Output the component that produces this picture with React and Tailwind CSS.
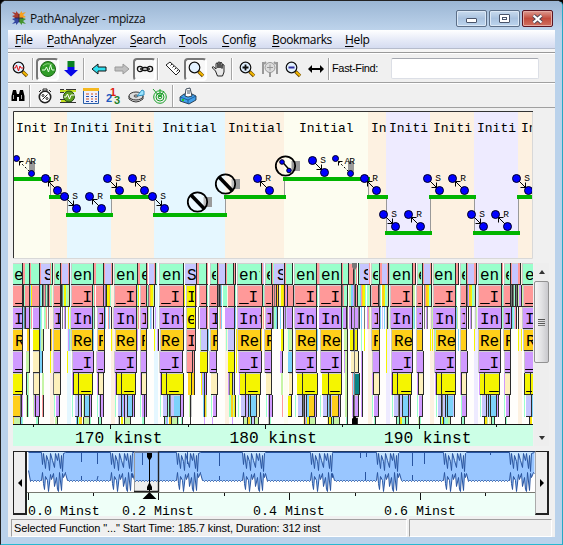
import React from "react";

const MONO = "'Liberation Mono', monospace";

const COLORS = {
  g: "#99ffcc", p: "#ff9999", l: "#c6c6ff", v: "#d09aff", o: "#ffcf1a", y: "#f5f500",
  c: "#fdf0bc", b: "#7cd2fa", k: "#2c2c2c", L: "#c6f4a6", h: "#c8c8c8", m: "#777777", t: "#0a8484",
  w: "#ffffff", r: "#f06a70",
};

const BANDS = [
  [13, 37, "#fdfdf0"], [50, 17, "#fdf1e1"], [67, 44, "#e5f7ff"], [111, 43, "#fdf1e1"],
  [154, 71, "#e5f7ff"], [225, 59, "#fdf1e1"], [284, 84, "#fdfdf0"], [368, 18, "#fdf1e1"],
  [386, 44, "#eeebff"], [430, 44, "#fdf1e1"], [474, 44, "#eeebff"], [518, 15, "#fdf1e1"],
];
const STATES = [
  [16, "Init"], [53, "In"], [70, "Initi"], [114, "Initi"], [162, "Initial"], [228, "Initial"],
  [299, "Initial"], [371, "In"], [389, "Initi"], [433, "Initi"], [477, "Initi"], [521, "In"],
];
const LEVELS = [
  [13, 51, 177], [49, 69, 195], [66, 113, 213], [110, 156, 195], [153, 227, 213], [224, 286, 195],
  [283, 370, 177], [367, 388, 195], [385, 432, 231], [429, 476, 195], [473, 520, 231], [517, 533, 195],
];
const MOVES = [
  ["R", 45.5, 178.5], ["S", 64.5, 196.5], ["R", 89.5, 196.5], ["S", 107.5, 178.5], ["R", 132.5, 178.5],
  ["S", 152.5, 196.5], ["R", 257.5, 178.5], ["S", 312.5, 160.5], ["R", 364.5, 178.5], ["S", 383.5, 214.5],
  ["R", 408.5, 214.5], ["S", 427.5, 178.5], ["R", 452.5, 178.5], ["S", 471.5, 214.5], ["R", 495.5, 214.5],
  ["S", 516.5, 178.5],
];

function Ball({ x, y, r = 4 }) {
  return <circle cx={x} cy={y} r={r} fill="#0000ff" stroke="#000022" strokeWidth="1" />;
}

function Move({ kind, x, y }) {
  const tip = kind === "S" ? [x + 9, y + 9, -1] : [x + 3, y + 3, 1];
  return (
    <g>
      <path d={`M${x} ${y}l12 12`} stroke="#000" />
      <path d={`M${tip[0] + tip[2] * 5} ${tip[1]}H${tip[0]}V${tip[1] + tip[2] * 5}`} fill="none" stroke="#000" />
      <Ball x={x} y={y} />
      <Ball x={x + 12} y={y + 12} />
      <text x={x + 7.8} y={y + 2.7} fontSize="9.500" fontFamily={MONO}>{kind}</text>
    </g>
  );
}

function Retry({ x }) {
  return (
    <g>
      <path d={`M${x + 12.5} 161.500h6v10h-6z`} fill="#9a9a9a" />
      <path d={`M${x} 158.500l15 15`} stroke="#000" strokeDasharray="2 2" />
      <path d={`M${x + 3} 165.500v-4h4`} stroke="#000" fill="none" />
      <Ball x={x} y={158.5} r={3} />
      <Ball x={x + 15} y={173.5} r={3} />
      <text x={x + 9} y="163.800" fontSize="9.500" fontFamily={MONO} letterSpacing="-1">AR</text>
    </g>
  );
}

function Blocked({ x, y, link }) {
  return (
    <g>
      <path d={`M${x + 6} ${y - 5}h8.500v10h-8.500z`} fill="#9a9a9a" />
      <circle cx={x} cy={y} r="9.700" fill={link ? "none" : "#fff"} fillOpacity="0.35" stroke="#000" strokeWidth="1.800" />
      {link ? (
        <g>
          <path d={`M${x - 3} ${y - 4}l7 8`} stroke="#000" strokeWidth="1.500" />
          <Ball x={x - 3.5} y={y - 4} r={2.3} />
          <Ball x={x + 3.5} y={y + 4.5} r={2.3} />
        </g>
      ) : (
        <path d={`M${x - 6.5} ${y - 7}l13.500 14`} stroke="#000" strokeWidth="3.600" />
      )}
    </g>
  );
}

function StateChart() {
  return (
    <svg width="520" height="148" viewBox="13 111 520 148" className="block shrink-0">
      {BANDS.map(([x, w, c]) => <rect key={x} x={x} y="111" width={w} height="148" fill={c} />)}
      {BANDS.map(([x, w], i) => (
        <svg key={x} x={x} y="111" width={w} height="40" viewBox={`${x} 111 ${w} 40`}>
          <text x={STATES[i][0]} y="132" fontSize="13" fontFamily={MONO}>{STATES[i][1]}</text>
        </svg>
      ))}
      {LEVELS.slice(1).map(([x, , y], i) => {
        const prev = LEVELS[i][2];
        return <rect key={x} x={x + 1} y={Math.min(y, prev)} width="1" height={Math.abs(y - prev)} fill="#999" />;
      })}
      {LEVELS.map(([a, b, y]) => <rect key={a} x={a} y={y} width={b - a} height="4" fill="#00b400" />)}
      <Retry x={16.5} />
      <Retry x={335.5} />
      {MOVES.map(([k, x, y]) => <Move key={x} kind={k} x={x} y={y} />)}
      <Blocked x={197.5} y={202} />
      <Blocked x={225.5} y={184} />
      <Blocked x={285.5} y={166} link />
      <path d="M13.500 259V111.500H533" fill="none" stroke="#333" />
      <path d="M13 258.500H532.500V112" fill="none" stroke="#d8d8d8" />
    </svg>
  );
}

// Run-length call stacks: "@x" moves the pen, "<colour><width>" paints, "_n" skips.
const ROWS = [
  "@13 g9 k1 p2 @25 g4 k1 p1 g1 @32 g7 k1 p1 @41 l9 p1 g1 k1 @54 h1 g5 k1 p1 l6 p1 k1 @71 h1 g21 k1 p2 @96 g7 k1 p1 @105 l6 p1 k1 @114 h1 g22 k1 p2 @140 g6 k1 p1 @149 l5 p1 k1 g1 @159 h1 g23 k1 @185 l11 k1 p2 @199 g7 k1 p1 @210 h1 g6 k1 p1 @219 l6 k1 p1 @227 g6 k1 p1 k1 @237 h1 g23 k1 p1 l1 @265 h1 g5 k1 p1 g1 @274 l10 k1 p1 @286 g6 k1 @294 h1 g21 k1 p2 @319 h1 g21 k1 p1 @343 g5 k1 p4 k1 p1 g1 p1 @358 k1 g1 @360 l9 p1 @371 h1 g7 k1 p2 @382 l5 p1 k1 @389 h1 g22 k1 p2 k1 @417 h1 g4 k1 p1 @424 l6 p1 k1 @433 h1 g21 k1 p2 k1 @460 h1 g5 k1 p1 @468 l6 p2 k1 @478 h1 g22 k1 p1 @504 h1 g5 k1 p1 @512 l6 p2 k1 @522 h1 g10",
  "@13 p9 k2 g1 p4 k1 b1 y1 @32 p7 k1 b1 g1 k1 m1 p1 m1 g1 @47 m1 k1 p1 g1 L1 @53 h1 p6 k2 m1 g1 y2 g1 L2 k1 @71 h1 p20 k1 g1 p1 @96 p7 k1 v1 m1 k1 y2 o1 g1 @114 h1 p21 k1 g1 y1 @140 h1 p5 k1 g1 m1 p1 o1 y2 L1 k1 @159 h1 p23 k1 y1 @186 h1 y8 k1 p1 @199 h1 p6 k1 g1 @209 h1 p7 k1 m1 k1 m1 b1 @223 g4 @228 p6 k1 g1 @237 h1 p24 k1 g1 @264 h1 p7 k1 p1 m1 p1 k1 @277 o1 k1 c2 y2 o1 k1 p1 @286 v1 k1 p5 k1 @294 h1 p21 k1 g1 @319 h1 p21 k1 m1 p1 g3 k1 @349 L2 b2 v1 y1 k1 @356 p1 k1 g2 b1 p1 o1 y2 g1 @367 g2 L1 k1 @371 h1 p6 k1 m1 g1 @382 o2 y1 g2 L1 k1 @390 h1 p21 k1 L2 @416 h1 p5 k1 @424 m1 p1 o2 y1 g2 k1 @433 h1 p21 k1 g1 @460 h1 p5 k1 m1 v1 @469 o2 y1 g2 L1 k1 @478 h1 p22 k1 g1 @503 h1 p6 k1 m1 k1 m1 g1 k1 m1 k1 @518 L1 v2 k1 L1 @523 h1 p10",
  "@13 v9 k1 b1 m1 k1 @26 v3 k1 g1 p1 @33 v6 k1 b1 g1 @43 _1 g1 L1 p1 _1 m1 _2 @53 h1 v6 k1 _1 m1 _1 v1 m1 _2 @68 y1 _1 L1 @71 v21 k1 g1 m1 @97 h1 v6 k1 b1 @108 p1 b1 _1 k1 @113 h1 v22 k1 L1 p1 @140 h1 v6 k1 L1 _1 b1 l1 @153 k1 _1 v1 _1 @159 h1 v23 k1 @186 h1 y8 k1 _2 m1 @200 v6 k1 p1 @209 h1 v7 k1 _1 L1 p1 b1 @225 v9 k1 b1 @237 h1 v23 k1 c1 p1 @265 h1 v6 k1 m1 g2 b1 k1 _2 b1 @283 k1 v1 m1 l1 @287 v5 k1 @294 h1 v21 k1 @319 v22 k1 g1 v3 k1 m1 @349 v2 k1 v6 m1 k1 _1 b1 _1 @364 m1 _2 v1 p1 L1 @371 h1 v7 k1 b1 _1 l1 _1 b1 @386 h1 k1 L1 @390 h1 v21 k1 g1 b1 @416 h1 v5 k1 _1 m1 _1 v1 m1 _2 @431 h1 L1 @433 v22 k1 b1 L1 @460 h1 v5 k1 _1 k1 _1 v1 m1 _2 @475 h1 L1 @478 v23 k1 g1 @503 h1 v7 k1 b1 g1 @514 l1 p1 k1 _1 k1 @522 h1 v10",
  "@13 o9 k1 @27 o2 k1 @33 y6 k1 b1 L2 k1 @50 k1 o1 _1 h1 o6 k1 @68 v1 b1 L1 h1 o20 k1 b1 @97 h1 o6 k1 @111 y1 c1 @115 h1 o20 k1 v1 @140 h1 o5 k1 @154 y1 _2 v1 k1 _1 h1 o22 k1 @186 h1 p8 k1 @200 L1 l6 k1 b1 @210 h1 o6 k1 @226 g1 _1 l6 k1 _1 y1 h1 o22 k1 o1 @264 h1 o6 k1 @281 y2 k1 @288 g1 L3 k1 @295 h1 o20 k1 b1 @320 h1 o20 k1 @344 L3 k1 _2 y3 k1 y3 k1 @361 g1 _2 y1 @371 h1 o7 k1 @386 y1 @391 h1 o20 k1 @416 h1 o5 k1 @430 y1 _1 y1 @434 h1 g1 o19 k1 _2 b1 @460 h1 o5 k1 @474 y1 @478 h1 o21 k1 _2 h1 o6 k1 @518 y1 _2 y1 _1 h1 o10",
  "@13 v9 k1 @26 L3 k1 @33 c6 k1 b2 k1 @50 y1 _2 h1 v6 k1 @67 y1 _4 h1 v20 k1 @96 h1 v7 k1 @114 h1 v21 k1 @140 h1 v5 k1 @159 h1 v22 k1 @186 h1 p5 k1 p1 k1 @200 y7 k1 _1 h1 v6 k1 @228 y6 k1 _1 y1 @238 h1 v22 k1 @264 h1 v6 k1 @280 v2 k1 @288 b4 k1 @295 h1 v20 k1 @320 h1 v20 k1 @344 v1 L2 k1 _3 c3 k1 c3 k1 @361 v1 k1 @372 h1 v6 k1 @386 y1 @391 h1 v20 k1 @416 h1 v6 k1 @434 h1 v20 k1 @460 h1 v6 k1 @478 h1 v21 k1 @504 h1 v5 k1 @524 h1 v10",
  "@13 y9 k1 @26 k1 g1 L1 @33 m1 c5 k1 @42 L2 @53 m1 c6 k1 @72 v1 k1 y4 k1 y13 k1 @97 v1 k1 c4 k1 @115 v1 k1 y4 k1 y13 k1 @140 v1 k1 c4 k1 @160 v1 k1 y4 k1 y16 k1 @188 o2 y1 k1 o2 k1 @201 y1 v1 b1 k1 v1 k1 @211 c6 k1 @228 v1 m1 y2 k1 l1 k1 @239 v1 y5 k1 y14 k1 @266 c5 k1 @281 L2 @289 c3 k1 @297 y5 k1 y14 k1 @322 y6 k1 y12 k1 @345 L2 k1 @352 p1 b2 t4 k1 @361 v1 k1 @372 v1 k1 c5 k1 @391 v1 k1 y4 k1 y13 k1 @417 v1 k1 c4 k1 @435 v1 k1 y4 k1 y13 k1 @460 v1 k1 c4 k1 @479 v1 y4 k1 y14 k1 @504 v1 c5 k1 @524 k1 y5 k1 y4",
  "@13 o7 m1 k1 v1 @26 L1 k1 g1 @33 L1 v1 k1 v3 k1 @42 p1 k1 @54 g1 _1 v3 k1 @72 g1 _2 l3 k1 l1 v1 k1 _1 L1 k1 b4 k1 v1 k1 @97 g1 _1 l1 k1 v2 k1 @115 g1 _2 l3 k1 b1 v1 k1 l2 k1 b4 k1 v1 k1 @140 g1 _1 v2 k1 v1 k1 @160 g1 _2 l4 k1 g1 k1 m1 l3 b6 k1 v2 k1 @189 L1 k1 h1 @203 b1 k1 o1 L1 @211 g1 _1 v3 k1 @229 g2 o2 L1 y1 k1 @238 g1 _2 l4 k1 v1 l1 k1 b1 k1 b5 k1 c2 k1 @266 g1 _1 v1 k1 v2 k1 @282 p1 @288 y3 k1 @295 g1 _2 l4 k1 m1 k1 l1 k1 b2 o5 k1 v1 k1 @320 g1 _2 l4 k1 b1 m1 k1 l1 o6 k1 v1 k1 @345 L2 k1 @352 v1 k2 v3 k1 @361 v1 k1 @372 g1 _1 v4 k1 @392 g1 _1 l4 m1 k1 l2 k1 b5 k1 v1 k1 @417 g1 _1 v3 k1 @436 g1 _1 l3 k1 m1 l2 k1 b1 k1 b5 l1 k1 @461 g1 v4 k1 @480 g1 _1 l4 k1 l1 k1 b1 k1 b5 k1 v1 k1 @504 g1 _1 v3 k1 @524 g1 _1 l5 k1 b2",
  "@13 o1 L6 k1 b1 g1 @36 g2 k1 @55 L2 k1 @76 b1 k1 g1 y1 o2 _1 k1 L5 k1 g1 @98 k1 g2 k1 @118 h1 k1 _1 y2 _1 k1 L5 k1 @142 g2 k1 @164 k1 g1 v1 b1 _1 o2 k1 L5 k1 g1 @181 g1 k1 @190 k1 @204 v1 @212 v1 @232 v1 @243 k1 L3 k1 o2 g1 k1 l2 k1 L3 k1 @268 h1 k1 g1 @303 c1 k1 p1 b1 y2 k1 L5 k1 @327 c1 k1 y2 k1 g1 k1 L5 k1 @346 g1 k1 @354 k4 @374 g1 k1 @396 k1 g2 k1 o1 y1 g3 k1 g2 k1 @418 L1 k1 g1 @440 k1 g1 y1 k1 b1 g3 L2 k1 @461 k1 g2 k1 @484 k1 y1 o1 L1 _1 c2 k1 g2 k1 @505 k1 g1 @529 k1 o1 y1",
];

const LABELS = [
  [[14, 8, "e"], [44, 6, "S"], [55, 4, "e"], [73, 19, "en"], [116, 20, "en"], [141, 5, "e"], [162, 21, "en"], [187, 9, "S"], [211, 5, "e"], [239, 21, "ent"], [266, 4, "e"], [277, 6, "S"], [296, 20, "en"], [321, 20, "en"], [363, 5, "S"], [372, 6, "e"], [392, 20, "en"], [418, 3, "e"], [434, 20, "en"], [461, 4, "e"], [480, 20, "en"], [505, 4, "e"], [525, 8, "e"]],
  [[15, 7, "_"], [54, 6, "_"], [73, 19, "_I"], [116, 20, "_I"], [141, 4, "_"], [161, 21, "_I"], [187, 7, "I"], [201, 5, "_"], [211, 5, "_"], [239, 22, "_I"], [266, 5, "_"], [296, 20, "_I"], [321, 20, "_I"], [373, 5, "_"], [392, 20, "_I"], [418, 3, "_"], [435, 20, "_I"], [461, 4, "_"], [480, 20, "_I"], [505, 5, "_"], [525, 8, "_"]],
  [[14, 8, "I"], [54, 6, "I"], [73, 19, "In"], [98, 5, "I"], [116, 20, "In"], [141, 5, "I"], [161, 22, "Int"], [187, 7, "e"], [211, 6, "I"], [239, 22, "Int"], [266, 5, "I"], [296, 20, "In"], [321, 20, "In"], [373, 5, "I"], [392, 20, "In"], [418, 3, "I"], [435, 20, "In"], [461, 4, "I"], [480, 20, "In"], [504, 6, "I"], [525, 8, "I"]],
  [[15, 7, "R"], [73, 19, "Re"], [98, 5, "R"], [116, 20, "Re"], [141, 4, "R"], [161, 21, "Re"], [187, 7, "I"], [212, 5, "R"], [240, 20, "Re"], [266, 5, "R"], [297, 19, "Re"], [322, 19, "Re"], [373, 5, "R"], [394, 18, "Re"], [437, 18, "Re"], [480, 20, "Re"], [505, 5, "R"], [526, 7, "R"]],
  [[15, 7, "_"], [73, 19, "_I"], [98, 5, "_"], [116, 20, "_I"], [161, 21, "_I"], [211, 6, "_"], [240, 20, "_I"], [265, 5, "_"], [296, 20, "_I"], [321, 20, "_I"], [393, 19, "_I"], [436, 19, "_I"], [480, 20, "_I"], [505, 5, "_"], [525, 8, "_"]],
  [[15, 7, "_"], [81, 11, "_"], [124, 10, "_"], [169, 13, "_:"], [248, 12, "_:"], [305, 10, "_"], [330, 11, "_"], [401, 10, "_"], [445, 10, "_"], [489, 10, "_"], [526, 6, "_"]],
];

function decode(row) {
  let x = 13;
  const out = [];
  for (const token of row.split(" ")) {
    const n = Number(token.slice(1));
    if (token[0] === "@") { x = n; continue; }
    if (token[0] !== "_") out.push([x, n, COLORS[token[0]]]);
    x += n;
  }
  return out;
}

function CallStack() {
  return (
    <svg width="520" height="183" viewBox="13 263 520 183" className="block shrink-0">
      <rect x="13" y="263" width="520" height="161" fill="#fffefc" />
      {BANDS.slice(1).map(([x, , c]) => <rect key={x} x={x} y="263" width="4" height="161" fill={c} />)}
      {ROWS.map((row, i) => {
        const top = 263 + i * 22;
        const height = i === 7 ? 7 : 22;
        return (
          <g key={i} shapeRendering="crispEdges">
            {decode(row).map(([x, w, c], j) => (
              <g key={j}>
                <rect x={x} y={top} width={w} height={height} fill={c} />
                {w > 2 && <rect x={x} y={top} width={w} height="1" fill="#d0d0d0" />}
                {(w > 2 || i < 2) && i < 7 && <rect x={x} y={top + 21} width={w} height="1" fill="#2c2c2c" />}
              </g>
            ))}
          </g>
        );
      })}
      {LABELS.map((row, i) => row.map(([x, w, s]) => (
        <svg key={`${i}-${x}`} x={x} y={263 + i * 22} width={w} height="22" viewBox={`${x} 0 ${w} 22`}>
          <text x={x} y="17" fontSize="16" fontFamily={MONO}>{s}</text>
        </svg>
      )))}
      <path d="M352 263h5v4l-2 3h-1l-2-3z" fill="#777" />
      <rect x="354" y="268" width="1" height="150" fill="#777" />
      <path d="M352 424v-5l2-3h1l2 3v5z" fill="#000" />
      <rect x="13" y="424" width="520" height="22" fill="#ccffe6" />
      <path d="M13 424.500H533M110.500 424v5M265.500 424v5M419.500 424v5M33.500 424v3M188.500 424v3M342.500 424v3M496.500 424v3" stroke="#111" />
      {[[75, "170 kinst"], [229.5, "180 kinst"], [384, "190 kinst"]].map(([x, s]) => (
        <text key={x} x={x} y="443" fontSize="16.200" fontFamily={MONO}>{s}</text>
      ))}
    </svg>
  );
}

// Offsets from a burst's left edge for the lower and upper envelopes.
const BURSTS = [[41, 65], [110, 132], [176, 200], [242, 265], [310, 332], [376, 399], [443, 466], [509, 534]];
const LOW = [[0, 480], [1, 472], [2, 483], [3, 489], [4, 476], [6, 480], [7, 491], [9, 474], [10, 479], [12, 473], [13, 486], [15, 477], [16, 489], [17, 491], [18, 472], [20, 490], [21, 473], [22, 477], [24, 472]];
const HIGH = [[0, 452], [1, 464], [2, 453], [4, 468], [5, 455], [7, 461], [8, 470], [9, 453], [11, 460], [13, 467], [14, 453], [16, 460], [17, 453], [19, 468], [20, 455], [21, 471], [22, 453]];

function tracePoints() {
  const low = [[28, 470], [30, 481]];
  const high = [[28, 452]];
  let x = 31;
  for (const [a, b] of BURSTS) {
    for (; x < a; x++) low.push([x, 480 + (x % 3 === 0 ? 1 : 0)]);
    LOW.filter(([dx]) => a + dx <= b).forEach(([dx, y]) => low.push([a + dx, y]));
    HIGH.filter(([dx]) => a + dx <= b).forEach(([dx, y]) => high.push([a + dx, y]));
    low.push([b, 473]);
    high.push([b, 452]);
    x = b + 2;
  }
  return { low, high };
}

const TRACE = tracePoints();
const join = (pts) => pts.map(([x, y]) => `${x + 0.5},${y + 0.5}`).join(" ");

function Overview() {
  const area = `${join(TRACE.high)} ${join([...TRACE.low].reverse())}`;
  return (
    <svg width="508" height="65" viewBox="27 451 508 65" className="block shrink-0">
      <rect x="27" y="451" width="508" height="42" fill="#fff" />
      <rect x="27" y="492" width="508" height="24" fill="#effff8" />
      <rect x="134" y="453" width="24" height="39" fill="#eeeeee" />
      {BURSTS.map(([a, b]) => <rect key={a} x={a} y="452" width={b - a} height="18" fill="#c5e4ff" />)}
      <polygon points={area} fill="#99c6ff" />
      <polyline points={join(TRACE.low)} fill="none" stroke="#2854a0" strokeWidth="1" />
      <polyline points={join(TRACE.high)} fill="none" stroke="#2854a0" strokeWidth="1" />
      <path d="M81.500 452v10M97.500 452v12M142.500 452v13M187.500 452v12M219.500 452v14M360.500 452v6M366.500 452v5M412.500 452v14M424.500 452v12M490.500 452v3M81.500 480v-4M97 480l1-4M219.500 480v-4M365.500 480v-8M412.500 480v-5" stroke="#2854a0" fill="none" />
      <path d="M27 451.500H535" stroke="#203860" />
      <path d="M27 492.500H535" stroke="#777870" />
      <path d="M28.500 493v7M158.500 493v7M289.500 493v7M420.500 493v7M93.500 493v3M224.500 493v3M355.500 493v3M485.500 493v3" stroke="#111" />
      <path d="M134.500 491V452H158" stroke="#999" fill="none" />
      <path d="M134 491.500H158.500V452" stroke="#222" fill="none" strokeWidth="1.400" />
      <path d="M149.500 453V491" stroke="#000" />
      <path d="M147 453h5v4l-2 3h-1l-2-3zM147 490v-3l2-4h1l2 4v3zM149.500 492l7 7h-14z" fill="#000" />
      {[[28, "0.0 Minst"], [122, "0.2 Minst"], [253, "0.4 Minst"], [384, "0.6 Minst"]].map(([x, s]) => (
        <text key={x} x={x} y="515" fontSize="13.300" fontFamily={MONO}>{s}</text>
      ))}
    </svg>
  );
}

function Lens({ mark, gray }) {
  return (
    <g fill="none">
      <path d="M10.500 10.500l4.500 4.500" stroke={gray ? "#999" : "#6b4a00"} strokeWidth="3.400" />
      <path d="M11 11l4 3.500" stroke={gray ? "#aaa" : "#f5b800"} strokeWidth="2" />
      <circle cx="6.500" cy="6.500" r="5.300" fill={gray ? "#ddd" : "#e2f1ff"} stroke={gray ? "#999" : "#111"} strokeWidth="1.200" />
      {mark}
    </g>
  );
}

const pulse = "M1.500 7h2l1-3 2 6 1.500-5 1 2h2.500";

const ICONS = {
  pulseLens: <Lens mark={<path d={pulse} stroke="#e01010" />} />,
  pulseDisc: (
    <g fill="none">
      <circle cx="8" cy="8" r="7.500" fill="#309c28" stroke="#1c6418" />
      <path d="M3 5q4-4 9-1" stroke="#8bd47f" />
      <path d="M2 9h3l1.500-3 2 5 2-7 1.500 5h2.500" stroke="#e8ffe4" />
    </g>
  ),
  down: <g><path d="M4.500 0h7v6h-7z" fill="#088020" /><path d="M4.500 6h7v3H15l-7 6.500L1 9h3.500z" fill="#0808e8" /></g>,
  back: <path d="M1 8l6-5v3h8v4H7v3z" fill="#30dff0" stroke="#111" />,
  forward: <path d="M15 8L9 3v3H1v4h8v3z" fill="#c0c0c0" stroke="#999" />,
  chain: (
    <g fill="#eee" stroke="#111" strokeWidth="1.300">
      <circle cx="3" cy="8" r="2.600" /><circle cx="13" cy="8" r="2.600" /><path d="M3 8h3M10 8h3" />
      <rect x="5.500" y="6.500" width="5" height="3" rx="1.500" />
    </g>
  ),
  ruler: (
    <g fill="#fff" stroke="#222">
      <path d="M1 4l4-3 10 9-4 4z" /><path d="M7 3L5.500 4.500M9 5L7.500 6.500M11 7L9.500 8.500M13 9l-1.500 1.500" />
    </g>
  ),
  lens: <Lens />,
  hand: <path d="M4.500 10L1.500 7q-.8-1.500 1-1.200L5 8V2.500q1-1.200 2 0V7V1.500q1-1.200 2 0V7V2q1-1.200 2 0v5.500V4q1-1 2 0v7l-1.500 4h-5z" fill="#e8e8e8" stroke="#222" />,
  zoomIn: <Lens mark={<path d="M3.500 6.500h6M6.500 3.500v6" stroke="#111" strokeWidth="1.800" />} />,
  zoomSel: (
    <g fill="#ddd" stroke="#999">
      <circle cx="8" cy="6.500" r="5" /><path d="M5 6.500h6M8 3.500v6" /><path d="M1 1v12M15 1v12M2 3L4 1M14 3l-2-2M8 11v5" strokeWidth="2" />
    </g>
  ),
  zoomOut: <Lens mark={<path d="M3.500 6.500h6" stroke="#3030a0" strokeWidth="1.800" />} />,
  widen: <path d="M0 8l4-4v3h8V4l4 4-4 4V9H4v3z" fill="#000" />,
  binoculars: (
    <g>
      <path d="M3 2h3l1 4v7H1.500V8zM13 2h-3L9 6v7h5.500V8z" fill="#000" /><path d="M6 6h4v3H6z" fill="#000" />
      <path d="M3.500 7v4M11.500 7v4" stroke="#aaa" />
    </g>
  ),
  stopwatch: (
    <g fill="#fff" stroke="#222">
      <path d="M6 1h4v2H6zM2 4l2-2M12 2l2 2" /><circle cx="8" cy="9" r="5.700" strokeWidth="1.600" />
      <path d="M5.500 11.500l5-5" /><circle cx="6" cy="7.500" r="1" /><circle cx="10" cy="10.500" r="1" />
    </g>
  ),
  pulseList: (
    <g fill="none">
      <path d="M0 1.500h4M6 1.500h10M0 4.500h4M0 11.500h4M0 14.500h16" stroke="#333" /><path d="M0 3h16M1 13h5" stroke="#c4e020" strokeWidth="2" />
      <circle cx="9" cy="8.500" r="5.500" fill="#5f9c20" stroke="#204810" /><path d="M4 9h2l1.500-3 2 5 1.500-4h4" stroke="#fff" />
    </g>
  ),
  table: (
    <g fill="none">
      <path d="M.5.500h15v15H.5z" fill="#f0f0fa" stroke="#2860a8" /><path d="M0 1.500h16" stroke="#f5b820" strokeWidth="3" />
      <path d="M3 6h3M8 6h2M12 6h2M3 11h3M8 11h2M12 11h2" stroke="#d05020" /><path d="M3 8.500h3M8 8.500h2M12 8.500h2M3 13.500h3M8 13.500h2M12 13.500h2" stroke="#2850b0" />
    </g>
  ),
  numbers: (
    <g fontFamily="'Liberation Sans', sans-serif" fontSize="11" fontWeight="700">
      <text x="4" y="8" fill="#e02010">1</text><text x="0" y="14" fill="#2058c0">2</text><text x="8" y="16" fill="#208028">3</text>
    </g>
  ),
  disc: (
    <g fill="#ddd" stroke="#333">
      <path d="M0 8v3q7 6 14 0V8" /><ellipse cx="7" cy="8" rx="7" ry="4" /><ellipse cx="7" cy="8" rx="2" ry="1" fill="#fff" />
      <path d="M8 8l5-6 2 1v4z" fill="#9be4ff" stroke="#3090c0" />
    </g>
  ),
  radar: (
    <g fill="none" stroke="#18a028">
      <circle cx="8" cy="9" r="6.300" /><circle cx="8" cy="9" r="4" /><circle cx="8" cy="9" r="1.800" /><path d="M8 9L1 1M8 9V1M8 9l4-6" />
    </g>
  ),
  printer: (
    <g stroke="#123" strokeWidth=".8">
      <path d="M0 9l4-3h8l4 2v4l-7 4-9-3z" fill="#429fe8" /><path d="M5 8l1-7 4-1 2 8-4 1z" fill="#fff" />
      <path d="M7 3h3M7 5h3" /><path d="M0 9l8 3 8-4M8 12v4" fill="none" stroke="#145090" />
      <path d="M2 11h2v2H2z" fill="#20d020" stroke="none" />
    </g>
  ),
};

function Tool({ name, pressed }) {
  return (
    <div className={`flex h-[23px] w-[23px] shrink-0 items-center justify-center ${pressed ? "rounded-sm border-2 border-b-white border-l-[#777] border-r-white border-t-[#777] bg-[#f8f8f8]" : ""}`}>
      <svg width="16" height="16" viewBox="0 0 16 16" className="shrink-0 overflow-visible">{ICONS[name]}</svg>
    </div>
  );
}

function Divider() {
  return <div className="h-[22px] w-[5px] shrink-0 pl-px"><div className="h-full w-[2px] border-l border-[#a5a5a5] bg-white" /></div>;
}

const MENU = [["File", "w-8"], ["PathAnalyzer", "w-[83px]"], ["Search", "w-[49px]"], ["Tools", "w-[43px]"], ["Config", "w-[50px]"], ["Bookmarks", "w-[73px]"], ["Help", "w-10"]];

function TitleBar() {
  return (
    <header className="flex h-[29px] shrink-0 items-start bg-gradient-to-b from-[#9bb6d4] to-[#bdd3eb] pl-[11px] pr-[9px]">
      <svg width="14" height="14" viewBox="0 0 14 14" className="mt-[10px] shrink-0">
        <path d="M0 1l4 1V0l3 3v4H3L0 5l3-1z" fill="#a83c30" /><path d="M7 3l3-3v2l4-1-3 3 3 2-3 1H7z" fill="#f5a020" />
        <path d="M0 13l3-3-3-2 3-1h4v4l-3 3v-2z" fill="#3548a0" /><path d="M14 13l-3-3 3-2-3-1H7v4l3 3v-2z" fill="#449430" />
        <path d="M7 3v8M3 7h8" stroke="#302040" strokeWidth=".8" />
      </svg>
      <h1 className="ml-[4px] mt-[8px] flex-1 whitespace-nowrap font-['Open_Sans',sans-serif] text-[12px] leading-[20px] tracking-[-0.36px] text-[#111]">PathAnalyzer - mpizza</h1>
      <div className="mt-[9px] flex gap-[2px]">
        <div className="flex h-[17px] w-[31px] items-center justify-center rounded-[2px] border border-[#5c6f88] bg-gradient-to-b from-[#c9dbee] via-[#a9c2df] to-[#bdd5ee] shadow-[inset_0_0_0_1px_#dbe8f6]">
          <div className="mt-1 h-[5px] w-[11px] rounded-[1px] border border-[#49546a] bg-white" />
        </div>
        <div className="flex h-[17px] w-[31px] items-center justify-center rounded-[2px] border border-[#5c6f88] bg-gradient-to-b from-[#c9dbee] via-[#a9c2df] to-[#bdd5ee] shadow-[inset_0_0_0_1px_#dbe8f6]">
          <div className="flex h-[9px] w-[11px] items-center justify-center rounded-[1px] border border-[#49546a] bg-white"><div className="h-[3px] w-[5px] border border-[#49546a]" /></div>
        </div>
        <div className="flex h-[17px] w-[31px] items-center justify-center rounded-[2px] border border-[#5b1421] bg-gradient-to-b from-[#dc9a91] via-[#c24b3c] to-[#cf7060] shadow-[inset_0_0_0_1px_#e5aaa2]">
          <svg width="13" height="10" viewBox="0 0 13 10"><path d="M2.500 1.500l8 7M10.500 1.500l-8 7" stroke="#4b4858" strokeWidth="4" /><path d="M2.500 1.500l8 7M10.500 1.500l-8 7" stroke="#fff" strokeWidth="2.300" /></svg>
        </div>
      </div>
    </header>
  );
}

function ScrollBar() {
  return (
    <div className="ml-[1px] flex h-[183px] w-[15px] flex-col items-center bg-[#eeeeee]">
      <div className="flex h-[18px] items-center"><div className="border-x-[3px] border-b-4 border-x-transparent border-b-[#333]" /></div>
      <div className="flex h-[82px] w-[15px] flex-col items-center justify-center gap-px rounded-[2px] border border-[#929292] bg-gradient-to-r from-[#f5f5f5] via-[#e2e2e4] to-[#c9c9cd]">
        <div className="h-px w-[7px] bg-[#555]" /><div className="h-px w-[7px] bg-[#777]" /><div className="h-px w-[7px] bg-[#555]" /><div className="h-px w-[7px] bg-[#777]" />
      </div>
      <div className="mt-auto flex h-[16px] items-center"><div className="border-x-[3px] border-t-4 border-x-transparent border-t-[#333]" /></div>
    </div>
  );
}

export default function App() {
  return (
    <div className="h-[545px] w-[563px] overflow-hidden bg-black">
      <div className="flex h-full w-full flex-col overflow-hidden rounded-t-[6px] border border-[#222] border-b-[#28b8d0] border-r-[#28a8c4] bg-[#bad2eb]">
        <TitleBar />
        <main className="ml-[7px] flex h-[507px] w-[547px] shrink-0 flex-col bg-[#f0f0f0] text-black">
          <nav className="flex h-[19px] shrink-0 border-b border-[#b6bccc] bg-gradient-to-b from-white via-[#e8ecf8] to-[#d5dcf0] pl-[7px] font-['Open_Sans',sans-serif] text-[12px] leading-[20px] tracking-[-0.36px]">
            {MENU.map(([label, width]) => (
              <div key={label} className={`shrink-0 whitespace-nowrap ${width}`}><span className="underline underline-offset-2">{label[0]}</span>{label.slice(1)}</div>
            ))}
          </nav>
          <div className="h-[4px] shrink-0 border-b border-[#999] bg-[#f5f5f5]" />
          <div className="flex h-[30px] shrink-0 items-center border-b border-t border-b-[#a0a0a0] border-t-white pt-[2px]">
            <Tool name="pulseLens" /><Divider /><Tool name="pulseDisc" pressed /><Tool name="down" /><Divider />
            <Tool name="back" /><Tool name="forward" /><Tool name="chain" pressed /><Divider />
            <Tool name="ruler" /><Tool name="lens" pressed /><Tool name="hand" /><Divider />
            <Tool name="zoomIn" /><Tool name="zoomSel" /><Tool name="zoomOut" /><Tool name="widen" /><Divider />
            <label className="-mt-[2px] w-[59px] whitespace-nowrap font-['Liberation_Sans',sans-serif] text-[11px] tracking-[-0.35px]">Fast-Find:</label>
            <div className="-mt-[2px] h-[21px] w-[148px] rounded-[2px] border border-[#dcdfe6] border-t-[#a5a8b0] bg-white" />
          </div>
          <div className="flex h-[25px] shrink-0 items-center border-b border-t border-b-[#a0a0a0] border-t-white">
            <div className="flex w-[20px] justify-center"><Tool name="binoculars" /></div><Divider />
            <Tool name="stopwatch" /><Tool name="pulseList" /><Tool name="table" /><Tool name="numbers" /><Tool name="disc" /><Tool name="radar" /><Divider />
            <Tool name="printer" />
          </div>
          <section className="flex flex-col pl-[5px] pt-[3px]">
            <StateChart />
            <div className="mt-[4px] flex"><CallStack /><ScrollBar /></div>
            <div className="mt-[5px] flex h-[65px] w-[536px]">
              <button className="flex h-[64px] w-[14px] shrink-0 items-center justify-center border-b-2 border-l border-r-2 border-t border-[#222] bg-[#eeeeee]"><div className="border-y-4 border-r-4 border-y-transparent border-r-black" /></button>
              <Overview />
              <button className="flex h-[64px] w-[14px] shrink-0 items-center justify-center border-b-2 border-l border-r-2 border-t border-[#222] border-l-[#aaa] bg-[#eeeeee]"><div className="border-y-4 border-l-4 border-y-transparent border-l-black" /></button>
            </div>
          </section>
          <footer className="ml-[3px] mt-[3px] flex h-[18px] gap-[2px] font-['Liberation_Sans',sans-serif] text-[11px] leading-[16px] tracking-[-0.1px]">
            <div className="w-[396px] whitespace-nowrap border border-b-white border-l-[#a0a0a0] border-r-white border-t-[#a0a0a0] pl-[2px]">Selected Function "..." Start Time: 185.7 kinst, Duration: 312 inst</div>
            <div className="w-[143px] border border-b-white border-l-[#a0a0a0] border-r-white border-t-[#a0a0a0]" />
          </footer>
        </main>
      </div>
    </div>
  );
}
